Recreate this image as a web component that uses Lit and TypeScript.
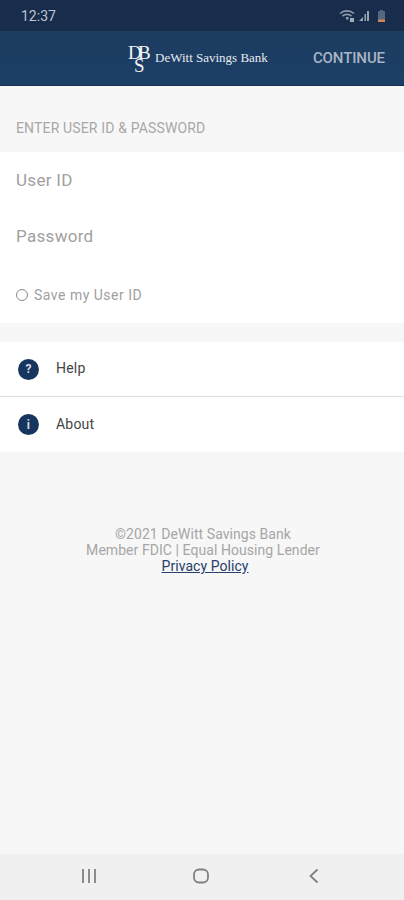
import { LitElement, html, css } from "lit";
import { customElement } from "lit/decorators.js";

@customElement("app-root")
export class AppRoot extends LitElement {
  static styles = css`
    :host { display: block; width: 404px; height: 900px; font-family: Roboto, "Liberation Sans", sans-serif; background: #f7f7f7; }
    .page { height: 900px; display: flex; flex-direction: column; overflow: hidden; }
    .status { height: 31px; flex: none; background: #172d4b; display: flex; align-items: center; justify-content: space-between; padding: 0 15px 0 21px; color: #bcc4ce; font-size: 14px; box-sizing: border-box; }
    .status svg { display: block; }
    .bar { height: 55px; flex: none; background: linear-gradient(#1c3c60, #1d3f66); border-bottom: 1px solid #16304f; box-sizing: border-box; display: flex; align-items: center; padding: 0 19px 0 128px; }
    .logo { display: flex; align-items: center; color: #e6eaee; flex: 1; }
    .mono { width: 27px; height: 26px; flex: none; display: grid; grid-template-columns: 10px 10px; grid-template-rows: 13px 11px; font-family: "Liberation Serif", serif; color: #f3f5f7; font-size: 19px; line-height: 12px; letter-spacing: -3px; margin-top: 3px; }
    .mono span:nth-child(3) { grid-column: 1 / 3; padding-left: 6px; }
    .bankname { font-family: "Liberation Serif", serif; font-size: 13px; white-space: nowrap; }
    .continue { color: #a9b5c3; font-size: 15px; font-weight: 500; letter-spacing: -0.1px; }
    .head { height: 66px; flex: none; display: flex; align-items: center; padding: 18px 16px 0; box-sizing: border-box; color: #a8a8a8; font-size: 14px; letter-spacing: 0.15px; }
    .form { background: #fff; height: 171px; flex: none; display: flex; flex-direction: column; padding-left: 16px; color: #a0a0a0; }
    .field { height: 56px; flex: none; display: flex; align-items: center; font-size: 17px; letter-spacing: 0.3px; }
    .save { flex: 1; display: flex; align-items: center; font-size: 14px; gap: 6px; letter-spacing: 0.5px; padding-top: 3px; }
    .radio { width: 10px; height: 10px; border: 1.5px solid #8a8a8a; border-radius: 50%; }
    .menu { margin-top: 19px; background: #fff; flex: none; }
    .row { height: 54px; display: flex; align-items: center; padding-left: 18px; gap: 17px; font-size: 14px; color: #444; letter-spacing: 0.2px; box-sizing: border-box; }
    .row + .row { height: 56px; border-top: 1px solid #e0e0e0; }
    .row .label { margin-top: -2px; }
    .ic { width: 21px; height: 21px; border-radius: 50%; background: #17365f; color: #d5dbe3; display: flex; align-items: center; justify-content: center; font-size: 12px; font-weight: 700; }
    .foot { margin-top: 74px; flex: 1; text-align: center; font-size: 14px; line-height: 16px; color: #a6a6a6; letter-spacing: 0.06px; }
    .foot a { color: #26406a; text-decoration: underline; display: block; padding-left: 6px; }
    .foot p { margin: 0; padding-left: 2px; }
    .nav { height: 46px; flex: none; background: #f0f0f0; display: flex; align-items: center; justify-content: space-between; padding: 0 84px 2px 81px; box-sizing: border-box; }
    .nav svg { display: block; }
    .nav .home { margin-right: 3px; }
  `;

  render() {
    return html`<div class="page">
      <div class="status">
        <span>12:37</span>
        <svg width="50" height="14" viewBox="0 0 50 14">
          <path d="M1 4.5 C5 1, 11 1, 15 4.5 M3.5 7 C6.5 4.8, 9.5 4.8, 12.5 7" stroke="#8f9cac" stroke-width="1.6" fill="none"/>
          <rect x="7" y="8" width="2.5" height="2.5" fill="#8f9cac"/><rect x="11" y="9" width="4" height="4" fill="#a2adba"/>
          <path d="M20 12 L24 12 L24 8 Z M25.5 12 H27 V5 H25.5 Z M28 12 H30 V2 H28 Z" fill="#98a4b2"/>
          <rect x="39" y="2" width="7" height="11" rx="1" fill="#55677f"/><rect x="41" y="1" width="3" height="1" fill="#55677f"/>
          <rect x="39" y="10.5" width="7" height="2.5" fill="#d28256"/>
        </svg>
      </div>
      <div class="bar">
        <div class="logo">
          <div class="mono"><span>D</span><span>B</span><span>S</span></div>
          <span class="bankname">DeWitt Savings Bank</span>
        </div>
        <span class="continue">CONTINUE</span>
      </div>
      <div class="head">ENTER USER ID &amp; PASSWORD</div>
      <div class="form">
        <div class="field">User ID</div>
        <div class="field">Password</div>
        <div class="save"><span class="radio"></span><span>Save my User ID</span></div>
      </div>
      <div class="menu">
        <div class="row"><span class="ic">?</span><span class="label">Help</span></div>
        <div class="row"><span class="ic">i</span><span class="label">About</span></div>
      </div>
      <div class="foot"><p>©2021 DeWitt Savings Bank</p><p>Member FDIC | Equal Housing Lender</p><a>Privacy Policy</a></div>
      <div class="nav">
        <svg width="16" height="16" viewBox="0 0 16 16"><path d="M2 1V15M8 1V15M14 1V15" stroke="#808080" stroke-width="1.8"/></svg>
        <svg class="home" width="16" height="16" viewBox="0 0 16 16"><rect x="1" y="1.5" width="14" height="13" rx="5" fill="none" stroke="#808080" stroke-width="1.8"/></svg>
        <svg width="12" height="16" viewBox="0 0 12 16"><path d="M9.5 1.5 L2.5 8 L9.5 14.5" fill="none" stroke="#808080" stroke-width="1.8"/></svg>
      </div>
    </div>`;
  }
}
